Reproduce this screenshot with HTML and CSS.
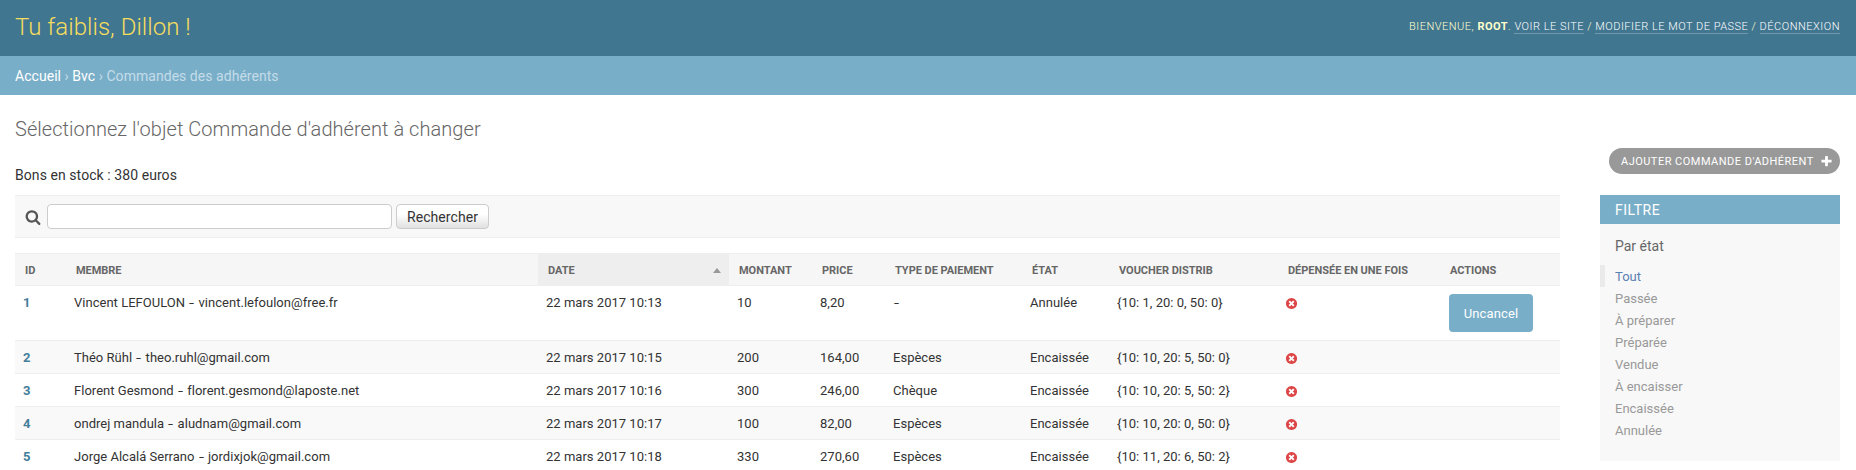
FILE: index.html
```html
<!DOCTYPE html>
<html lang="fr">
<head>
<meta charset="utf-8">
<title>Sélectionnez l'objet Commande d'adhérent à changer</title>
<link rel="stylesheet" href="styles.css">
</head>
<body>
<svg class="defs" width="0" height="0">
  <symbol id="icon-no" viewBox="0 0 1792 1792"><path d="M1277 1122q0-26-19-45l-181-181 181-181q19-19 19-45 0-27-19-46l-90-90q-19-19-46-19-26 0-45 19l-181 181-181-181q-19-19-45-19-27 0-46 19l-90 90q-19 19-19 46 0 26 19 45l181 181-181 181q-19 19-19 45 0 27 19 46l90 90q19 19 46 19 26 0 45-19l181-181 181 181q19 19 45 19 27 0 46-19l90-90q19-19 19-46zm387-226q0 209-103 385.500t-279.500 279.500-385.500 103-385.500-103-279.500-279.500-103-385.500 103-385.500 279.500-279.500 385.500-103 385.500 103 279.500 279.500 103 385.500z"/></symbol>
</svg>
<header class="header">
  <h1 class="site-name">Tu faiblis, Dillon !</h1>
  <div class="user-tools">Bienvenue, <strong>root</strong>. <a>Voir le site</a> / <a>Modifier le mot de passe</a> / <a>Déconnexion</a></div>
</header>
<nav class="breadcrumbs"><a>Accueil</a> › <a>Bvc</a> › Commandes des adhérents</nav>
<main class="content">
  <section class="main-col">
    <h2 class="title">Sélectionnez l'objet Commande d'adhérent à changer</h2>
    <p class="stock">Bons en stock : 380 euros</p>
    <form class="toolbar">
      <svg class="search-icon" viewBox="0 0 1792 1792"><path fill="#555" d="M1216 832q0-185-131.500-316.500t-316.500-131.500-316.500 131.500-131.500 316.500 131.500 316.500 316.500 131.500 316.500-131.500 131.500-316.500zm512 832q0 52-38 90t-90 38q-54 0-90-38l-343-342q-179 124-399 124-143 0-273.500-55.500t-225-150-150-225-55.500-273.500 55.500-273.500 150-225 225-150 273.500-55.500 273.500 55.500 225 150 150 225 55.500 273.500q0 220-124 399l343 343q37 37 37 90z"/></svg>
      <input class="search" type="text">
      <button class="submit" type="button">Rechercher</button>
    </form>
    <table class="results">
      <colgroup><col class="c-id"><col class="c-member"><col class="c-date"><col class="c-amount"><col class="c-price"><col class="c-type"><col class="c-state"><col class="c-voucher"><col class="c-spent"><col class="c-actions"></colgroup>
      <thead><tr><th>ID</th><th>Membre</th><th class="sorted"><div class="sort-head">Date<span class="arrow"></span></div></th><th>Montant</th><th>Price</th><th>Type de paiement</th><th>État</th><th>Voucher distrib</th><th>Dépensée en une fois</th><th>Actions</th></tr></thead>
      <tbody>
        <tr><td class="id">1</td><td>Vincent LEFOULON <span class="dash">-</span> vincent.lefoulon@free.fr</td><td>22 mars 2017 10:13</td><td>10</td><td>8,20</td><td><span class="dash">-</span></td><td>Annulée</td><td>{10: 1, 20: 0, 50: 0}</td><td><svg class="no"><use href="#icon-no"/></svg></td><td class="actions"><a class="button">Uncancel</a></td></tr>
        <tr><td class="id">2</td><td>Théo Rühl <span class="dash">-</span> theo.ruhl@gmail.com</td><td>22 mars 2017 10:15</td><td>200</td><td>164,00</td><td>Espèces</td><td>Encaissée</td><td>{10: 10, 20: 5, 50: 0}</td><td><svg class="no"><use href="#icon-no"/></svg></td><td></td></tr>
        <tr><td class="id">3</td><td>Florent Gesmond <span class="dash">-</span> florent.gesmond@laposte.net</td><td>22 mars 2017 10:16</td><td>300</td><td>246,00</td><td>Chèque</td><td>Encaissée</td><td>{10: 10, 20: 5, 50: 2}</td><td><svg class="no"><use href="#icon-no"/></svg></td><td></td></tr>
        <tr><td class="id">4</td><td>ondrej mandula <span class="dash">-</span> aludnam@gmail.com</td><td>22 mars 2017 10:17</td><td>100</td><td>82,00</td><td>Espèces</td><td>Encaissée</td><td>{10: 10, 20: 0, 50: 0}</td><td><svg class="no"><use href="#icon-no"/></svg></td><td></td></tr>
        <tr><td class="id">5</td><td>Jorge Alcalá Serrano <span class="dash">-</span> jordixjok@gmail.com</td><td>22 mars 2017 10:18</td><td>330</td><td>270,60</td><td>Espèces</td><td>Encaissée</td><td>{10: 11, 20: 6, 50: 2}</td><td><svg class="no"><use href="#icon-no"/></svg></td><td></td></tr>
      </tbody>
    </table>
  </section>
  <aside class="side">
    <a class="add">Ajouter Commande d'adhérent
      <svg class="plus" viewBox="0 0 1792 1792"><path fill="#fff" d="M1600 736v192q0 40-28 68t-68 28h-416v416q0 40-28 68t-68 28h-192q-40 0-68-28t-28-68v-416h-416q-40 0-68-28t-28-68v-192q0-40 28-68t68-28h416v-416q0-40 28-68t68-28h192q40 0 68 28t28 68v416h416q40 0 68 28t28 68z"/></svg>
    </a>
    <div class="filter">
      <h2 class="filter-title">Filtre</h2>
      <h3 class="filter-by">Par état</h3>
      <ul class="choices"><li class="selected">Tout</li><li>Passée</li><li>À préparer</li><li>Préparée</li><li>Vendue</li><li>À encaisser</li><li>Encaissée</li><li>Annulée</li></ul>
    </div>
  </aside>
</main>
</body>
</html>
```
FILE: styles.css
```css
* { box-sizing: border-box; }
html, body { height: 100%; overflow: hidden; }
body { margin: 0; background: #fff; color: #333; font: 14px/1.2 Roboto, "Liberation Sans", sans-serif; }
h1, h2, h3, p, ul { margin: 0; padding: 0; }
.defs { display: block; }
.header { display: flex; justify-content: space-between; height: 56px; padding: 0 16px 0 15px; background: #417690; color: #ffc; }
.site-name { padding-top: 13px; font-size: 24px; line-height: 29px; font-weight: 300; letter-spacing: .04px; color: #f5dd5d; }
.user-tools { padding-top: 20px; font-size: 11px; line-height: 14px; font-weight: 300; letter-spacing: .5px; text-transform: uppercase; }
.user-tools strong { font-weight: 700; }
.user-tools a { color: #fff; border-bottom: 1px solid rgba(255,255,255,.25); }
.breadcrumbs { height: 39px; padding: 12px 15px; line-height: 17px; letter-spacing: .04px; background: #79aec8; color: #c4dce8; }
.breadcrumbs a { color: #fff; }
.content { display: flex; gap: 40px; padding: 0 16px 0 15px; }
.main-col { width: 1545px; }
.title { padding-top: 22px; font-size: 20px; line-height: 24px; font-weight: 300; letter-spacing: .05px; color: #666; }
.stock { padding-top: 26px; line-height: 17px; letter-spacing: .07px; }
.toolbar { display: flex; align-items: center; height: 43px; margin: 11px 0 15px; padding: 0 10px; background: #f8f8f8; border-top: 1px solid #eee; border-bottom: 1px solid #eee; }
.search-icon { width: 16px; height: 16px; margin-right: 6px; }
.search { width: 345px; height: 25px; margin: 0 4px 0 0; padding: 2px 5px; border: 1px solid #ccc; border-radius: 4px; background: #fff; }
.submit { width: 93px; height: 25px; padding: 1px 0 0; border: 1px solid #ccc; border-radius: 4px; background: #fff linear-gradient(#fff 40%, #e0e0e0); color: #333; font: 14px/22px Roboto, sans-serif; letter-spacing: .06px; }
.results { width: 1545px; table-layout: fixed; border-collapse: separate; border-spacing: 0; }
.c-id { width: 51px; } .c-member { width: 472px; } .c-date { width: 191px; } .c-amount { width: 83px; } .c-price { width: 73px; }
.c-type { width: 137px; } .c-state { width: 87px; } .c-voucher { width: 169px; } .c-spent { width: 162px; } .c-actions { width: 120px; }
th { height: 33px; padding: 2px 10px 0; background: #f6f6f6; border-top: 1px solid #eee; border-bottom: 1px solid #eee; color: #666; font-size: 11px; line-height: 14px; font-weight: 700; text-align: left; text-transform: uppercase; letter-spacing: -.03px; white-space: nowrap; }
.sorted { background: #eee; }
.sort-head { display: flex; justify-content: space-between; align-items: center; }
.arrow { margin-right: -2px; border: 4.5px solid transparent; border-top: 0; border-bottom: 5px solid #999; }
td { padding: 9px 8px 7px; height: 33px; border-bottom: 1px solid #eee; font-size: 13px; line-height: 16px; letter-spacing: .02px; vertical-align: top; white-space: nowrap; }
tbody tr:nth-child(even) td { background: #f9f9f9; }
.id { color: #447e9b; font-weight: 700; }
.dash { display: inline-block; width: 7px; text-align: center; transform: scaleX(1.4); }
.no { display: block; width: 13px; height: 13px; margin: 2px 0 0 -1px; fill: #dd4646; }
.actions { padding: 8px 8px 8px 9px; }
.button { display: block; width: 84px; height: 38px; padding-top: 12px; border-radius: 4px; background: #79aec8; color: #fff; letter-spacing: .15px; text-align: center; }
.side { display: flex; flex-direction: column; width: 240px; }
.add { display: flex; align-items: center; align-self: flex-end; width: 231px; height: 26px; margin: 53px 0 21px; padding: 1px 7px 0 12px; border-radius: 13px; background: #999; color: #fff; font-size: 11px; letter-spacing: .48px; text-transform: uppercase; white-space: nowrap; }
.plus { flex: none; width: 13px; height: 13px; margin-left: auto; }
.filter { height: 266px; background: #f8f8f8; }
.filter-title { height: 29px; padding: 1px 15px 0; background: #79aec8; color: #fff; font-size: 14px; line-height: 28px; font-weight: 400; letter-spacing: .5px; text-transform: uppercase; }
.filter-by { padding: 14px 15px 10px; color: #666; font-size: 14px; line-height: 17px; font-weight: 400; }
.choices { list-style: none; }
.choices li { height: 22px; padding: 1px 0 0 15px; color: #999; font-size: 13px; line-height: 22px; }
.choices .selected { padding-left: 10px; border-left: 5px solid #eaeaea; color: #5b80b2; }
```
